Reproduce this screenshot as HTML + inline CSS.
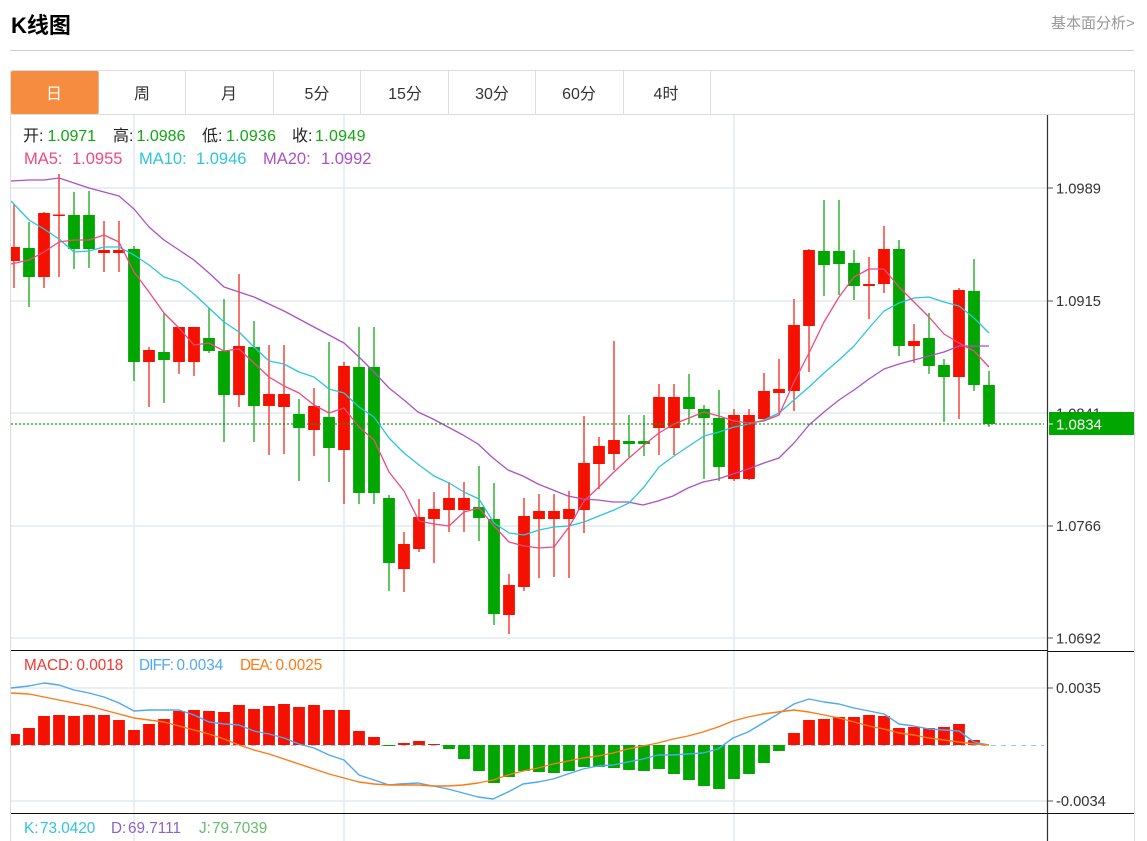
<!DOCTYPE html>
<html lang="zh"><head><meta charset="utf-8"><title>K线图</title>
<style>html,body{margin:0;padding:0;background:#fff;width:1147px;height:841px;overflow:hidden}svg{display:block}text{font-family:"Liberation Sans","Noto Sans CJK SC",sans-serif}</style></head><body>
<svg xmlns="http://www.w3.org/2000/svg" width="1147" height="841" viewBox="0 0 1147 841">
<text x="11" y="33" font-size="22" font-weight="700" fill="#000">K线图</text>
<text x="1051" y="28" font-size="15" fill="#999">基本面分析&gt;</text>
<path d="M10 50.500H1134" stroke="#ccc" fill="none"/>

<!-- grid -->
<path d="M11 188H1048M11 301H1048M11 413H1048M11 526H1048M11 638H1048M11 688H1048M11 801H1048M134 115V841M344 115V841M734 115V841" stroke="#e6eef4" stroke-width="1.800" fill="none"/>

<!-- candles -->
<g fill="none">
<path stroke="#f5392c" stroke-width="1.400" d="M14 205V288M44 212V288M59 174V277M104 221V272M119 221V272M149 347V407M179 327V374M194 327V376M239 274V407M269 345V455M284 345V454M314 388V456M344 362V504M404 532V592M419 499V552M434 492V563M449 482V532M464 482V532M509 574V634M524 498V591M539 494V578M554 494V577M569 491V578M584 416V533M599 437V489M614 341V470M659 384V455M674 384V455M734 409V481M749 409V480M764 373V420M779 359V415M794 299V411M809 249V372M869 257V319M884 226V293M914 324V363M959 288V419"/>
<path stroke="#22ad22" stroke-width="1.400" d="M29 222V307M74 192V269M89 191V268M134 246V381M164 313V403M209 308V353M224 299V442M254 321V442M299 399V481M329 342V482M359 327V504M374 327V504M389 495V591M479 466V541M494 483V625M629 415V457M644 415V456M689 374V424M704 405V479M719 390V481M824 200V296M839 200V295M854 250V300M899 240V356M929 313V374M944 359V422M974 259V391M989 371V427"/>
<path stroke="#f41100" stroke-width="11.800" d="M14 247V261M44 213V277M59 214.500V216M104 250V253M119 250V253M149 350V362M179 327V362M194 327V362M239 346V395M269 394V406M284 394V407M314 406V430M344 366V450M404 544V569M419 517V549M434 509V519M449 498V510M464 498V510M509 585V615M524 516V587M539 511V519M554 511V519M569 509V519M584 463V510M599 446V464M614 440V454M659 397V428M674 397V428M734 415V479M749 415V479M764 391V419M779 389V393M794 325V391M809 250V326M869 284V286M884 249V284M914 341V346M959 290V377"/>
<path stroke="#01a601" stroke-width="11.800" d="M29 248V277M74 215V249M89 215V249M134 249V362M164 352V360M209 338V351M224 351V395M254 347V406M299 414V428M329 417V448M359 367V493M374 367V493M389 498V563M479 507V518M494 519V614M629 441V444M644 441V444M689 397V409M704 409V418M719 418V467M824 251V265M839 251V264M854 263V286M899 249V346M929 338V366M944 365V377M974 291V385M989 385V424"/>
</g>

<!-- MAs -->
<g fill="none" stroke-width="1.300" stroke-linejoin="round">
<polyline stroke="#ab52c2" points="11,181 29,180 44,180 59,178 74,183 89,188 104,192 119,196 134,209 149,227 164,240 179,250 194,260 209,273 224,287 239,292 254,297 269,304 284,311 299,319 314,327 329,335 344,343 359,357 374,372 389,388 404,400 418,412 433,419 448,427 463,435 478,444 493,458 508,470 523,476 538,484 553,490 568,496 583,499 598,500 613,502 628,502 643,505 658,501 673,496 688,488 703,482 718,479 733,474 748,469 764,463 779,458 794,443 809,425 824,412 839,400 854,390 869,379 884,369 899,364 914,360 929,356 944,352 959,346 974,346 989,346"/>
<polyline stroke="#2cc5dc" points="11,201 29,220 44,229 59,239 74,252 89,251 104,247 119,247 134,255 149,265 164,277 179,282 194,294 209,308 224,322 239,332 254,347 269,361 284,364 299,372 314,377 329,389 344,393 359,407 374,417 389,438 404,453 419,465 434,476 449,483 464,492 479,499 494,523 509,533 524,535 539,530 554,527 569,526 584,522 599,516 614,510 629,503 644,487 659,467 674,456 689,446 704,436 719,432 734,427 749,424 764,420 779,413 794,400 809,387 824,373 839,360 854,346 869,328 884,311 899,303 914,298 929,297 944,302 959,306 974,318 989,333"/>
<polyline stroke="#ee4a82" points="11,264 29,260 44,252 59,242 74,240 89,240 104,235 119,242 134,272 149,292 164,313 179,328 194,345 209,343 224,351 239,349 254,363 269,377 284,386 299,393 314,405 329,413 344,408 359,427 374,440 389,472 404,491 419,521 434,524 449,526 464,512 479,508 494,526 509,542 524,546 539,548 554,547 569,527 584,501 599,487 614,472 629,458 644,445 659,433 674,424 689,418 704,412 719,416 734,421 749,423 764,421 779,415 794,382 809,353 824,322 839,297 854,277 869,269 884,269 899,287 914,302 929,317 944,334 959,343 974,351 989,367"/>
</g>

<!-- last price -->
<path d="M11 424H1044" stroke="#0d9f0d" stroke-width="1.300" stroke-dasharray="2 2" fill="none"/>

<!-- MACD -->
<path d="M11 745.500H1044" stroke="#8fcbe6" stroke-width="1" stroke-dasharray="5 5" fill="none"/>
<g fill="none" stroke-width="11.800">
<path stroke="#f41100" d="M14 745V734M29 745V728M44 745V716M59 745V715M74 745V716M89 745V715M104 745V715M119 745V720M134 745V730M149 745V724M164 745V719M179 745V711M194 745V710M209 745V711M224 745V712M239 745V705M254 745V709M269 745V706M284 745V704M299 745V707M314 745V705M329 745V710M344 745V710M359 745V731M374 745V737M404 745V743M419 745V741M434 745V744M794 745V733M809 745V720M824 745V719M839 745V717M854 745V717M869 745V715M884 745V716M899 745V728M914 745V727M929 745V728M944 745V727M959 745V724M974 745V740"/>
<path stroke="#01a601" d="M389 745V746M449 745V749M464 745V759M479 745V771M494 745V783M509 745V777M524 745V771M539 745V772M554 745V773M569 745V771M584 745V767M599 745V767M614 745V768M629 745V770M644 745V771M659 745V769M674 745V774M689 745V780M704 745V786M719 745V789M734 745V779M749 745V774M764 745V763M779 745V751"/>
</g>
<g fill="none" stroke-width="1.400" stroke-linejoin="round">
<polyline stroke="#4ea8f2" points="11,688 29,686 44,683 59,685 74,690 89,693 104,697 119,703 134,711 149,710 164,710 179,710 194,715 209,722 224,724 239,725 254,731 269,734 284,738 299,744 314,748 329,755 344,760 359,775 374,780 389,785 400,784 418,783 433,786 448,789 463,793 478,797 493,799 508,792 523,784 538,782 553,779 568,774 583,769 598,766 613,765 628,762 643,759 658,755 673,755 688,754 703,753 718,749 733,738 748,732 763,723 778,714 794,704 809,699 824,702 839,704 854,708 869,711 884,714 899,724 914,726 929,729 944,730 959,731 974,742 989,745"/>
<polyline stroke="#ff7a14" points="11,693 29,694 44,697 59,700 74,703 89,706 104,710 119,714 134,718 149,720 164,722 179,726 194,730 209,734 224,739 239,745 254,750 269,754 284,759 299,764 314,769 329,774 344,778 359,782 374,784 389,785 400,785 418,785 433,786 448,786 463,785 478,783 493,780 508,775 523,771 538,768 553,764 568,761 583,758 598,756 613,753 628,749 643,746 658,743 673,739 688,736 703,732 718,727 733,721 748,717 763,714 778,712 794,710 809,712 824,715 839,718 854,722 869,726 884,729 899,733 914,735 929,738 944,740 959,742 974,744 989,745"/>
</g>

<!-- pane separators -->
<path d="M11 650.500H1048M11 813.500H1048M1048 651.500H1134M1048 813.500H1134" stroke="#111" stroke-width="1" fill="none"/>
<path d="M1047.500 115V841" stroke="#333" stroke-width="1.200" fill="none"/>

<!-- axis -->
<path d="M1048 188H1053M1048 301H1053M1048 526H1053M1048 638H1053M1048 688H1053M1048 801H1053" stroke="#555" fill="none"/>
<g font-size="14.700" fill="#333">
<text x="1056" y="193.500">1.0989</text>
<text x="1056" y="306">1.0915</text>
<text x="1056" y="418.500">1.0841</text>
<text x="1056" y="531">1.0766</text>
<text x="1056" y="643.500">1.0692</text>
<text x="1056" y="693">0.0035</text>
<text x="1056" y="806">-0.0034</text>
</g>
<rect x="1049" y="412" width="85" height="23" fill="#01a601"/>
<path d="M1048 424H1053" stroke="#fff"/>
<text x="1056" y="429.500" font-size="15" fill="#fff">1.0834</text>

<!-- frame & tabs -->
<rect x="0" y="115" width="10" height="726" fill="#fff"/>
<path d="M10.500 70.500H1134.500V841M10.500 70.500V841M11 114.500H1134.500M98.500 71V114M185.500 71V114M273.500 71V114M360.500 71V114M448.500 71V114M535.500 71V114M623.500 71V114M710.500 71V114" stroke="#ddd" fill="none"/>
<rect x="11" y="71" width="87.500" height="43" rx="2" fill="#f58c40"/>
<g font-size="16" fill="#333" text-anchor="middle">
<text x="54" y="99" fill="#fff">日</text>
<text x="142" y="99">周</text>
<text x="229" y="99">月</text>
<text x="317" y="99">5分</text>
<text x="405" y="99">15分</text>
<text x="492" y="99">30分</text>
<text x="579" y="99">60分</text>
<text x="666" y="99">4时</text>
</g>

<!-- legends -->
<g font-size="16">
<text x="23" y="141" fill="#222">开:</text><text x="47.500" y="141" fill="#0fa80f" textLength="48.500">1.0971</text>
<text x="113" y="141" fill="#222">高:</text><text x="136.500" y="141" fill="#0fa80f" textLength="49">1.0986</text>
<text x="202" y="141" fill="#222">低:</text><text x="226" y="141" fill="#0fa80f" textLength="50">1.0936</text>
<text x="292" y="141" fill="#222">收:</text><text x="315" y="141" fill="#0fa80f" textLength="50.500">1.0949</text>
</g>
<g font-size="16.500">
<text x="24" y="164" fill="#ee4a82">MA5:</text><text x="72" y="164" fill="#ee4a82">1.0955</text>
<text x="139" y="164" fill="#2cc5dc">MA10:</text><text x="196" y="164" fill="#2cc5dc">1.0946</text>
<text x="263" y="164" fill="#ab52c2">MA20:</text><text x="321" y="164" fill="#ab52c2">1.0992</text>
</g>
<g font-size="15.300">
<text x="24" y="670" fill="#f5352c">MACD:</text><text x="76.500" y="670" fill="#f5352c">0.0018</text>
<text x="139" y="670" fill="#4ea8f2" textLength="35">DIFF:</text><text x="176.500" y="670" fill="#4ea8f2">0.0034</text>
<text x="240" y="670" fill="#ff7a14" textLength="33">DEA:</text><text x="275.500" y="670" fill="#ff7a14">0.0025</text>
<text x="24" y="833" fill="#2cc5dc">K:</text><text x="40" y="833" fill="#2cc5dc">73.0420</text>
<text x="111" y="833" fill="#8b62c9">D:</text><text x="128" y="833" fill="#8b62c9">69.7111</text>
<text x="199" y="833" fill="#68bc6e">J:</text><text x="212" y="833" fill="#68bc6e">79.7039</text>
</g>
</svg>
</body></html>
